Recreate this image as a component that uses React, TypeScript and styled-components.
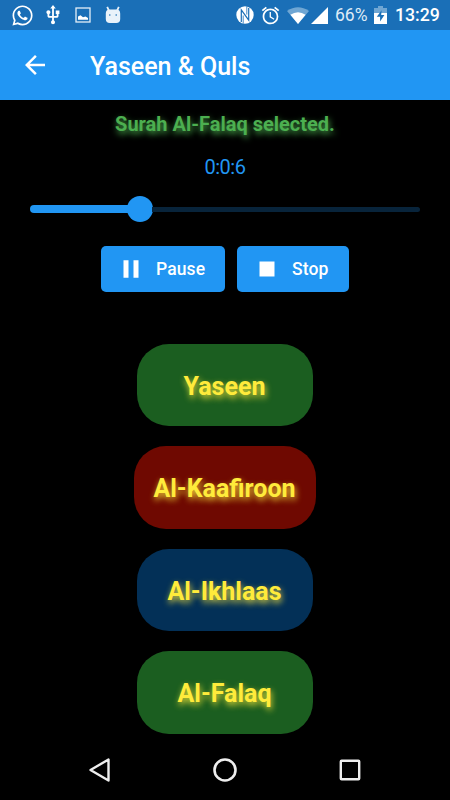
import React from "react";
import styled, { createGlobalStyle } from "styled-components";
import { FaWhatsapp } from "react-icons/fa";
import { MdArrowBack, MdPause, MdStop, MdUsb, MdAlarm } from "react-icons/md";

const GlobalStyle = createGlobalStyle`
  * { box-sizing: border-box; }
  body { margin: 0; background: #000; font-family: Roboto, sans-serif; }
  button { border: 0; padding: 0; font-family: inherit; }
  svg { display: block; flex: none; }
`;

const Screen = styled.div`
  width: 450px;
  height: 800px;
  display: flex;
  flex-direction: column;
  background: #000;
  overflow: hidden;
`;

const StatusBar = styled.div`
  height: 30px;
  flex: none;
  display: flex;
  align-items: center;
  background: #1a6fb7;
  color: #fff;
`;

const StatusSlot = styled.div<{ $w: number; $gap: number }>`
  width: ${(p) => p.$w}px;
  margin-left: ${(p) => p.$gap}px;
  flex: none;
  display: flex;
  justify-content: center;
`;

const StatusSpacer = styled.div`
  flex: 1;
`;

const StatusText = styled.span<{ $w: number; $gap: number; $strong?: boolean }>`
  width: ${(p) => p.$w}px;
  margin-left: ${(p) => p.$gap}px;
  font-size: ${(p) => (p.$strong ? 17.7 : 17.5)}px;
  font-weight: ${(p) => (p.$strong ? 500 : 400)};
  color: ${(p) => (p.$strong ? "#fff" : "#dfebf6")};
  line-height: 22px;
  white-space: nowrap;
`;

const AppBar = styled.header`
  height: 70px;
  flex: none;
  display: flex;
  align-items: center;
  padding-left: 20px;
  background: #2196f3;
  color: #fff;
`;

const BackButton = styled.button`
  width: 30px;
  height: 30px;
  background: none;
  color: #fff;
`;

const Title = styled.h1`
  margin: 3px 0 0 40px;
  font-size: 25px;
  font-weight: 500;
  line-height: 30px;
`;

const Content = styled.main`
  flex: 1;
  display: flex;
  flex-direction: column;
  align-items: center;
`;

const Selected = styled.div`
  margin-top: 12px;
  font-size: 20px;
  font-weight: 700;
  line-height: 24px;
  color: #4caf50;
  text-shadow: 1px 3px 6px #4caf50;
`;

const Timer = styled.div`
  margin-top: 19px;
  font-size: 20px;
  line-height: 24px;
  letter-spacing: -0.5px;
  color: #2196f3;
`;

const Slider = styled.div`
  width: 390px;
  height: 26px;
  margin-top: 17px;
  display: flex;
  align-items: center;
`;

const Played = styled.div`
  width: 98px;
  height: 8px;
  border-radius: 4px 0 0 4px;
  background: #2196f3;
`;

const Thumb = styled.div`
  width: 26px;
  height: 26px;
  margin: 0 -1px;
  border-radius: 50%;
  background: #2196f3;
`;

const Remaining = styled.div`
  flex: 1;
  height: 5px;
  border-radius: 0 3px 3px 0;
  background: #08243b;
`;

const Controls = styled.div`
  display: flex;
  gap: 12px;
  margin-top: 24px;
`;

const ControlButton = styled.button<{ $w: number }>`
  width: ${(p) => p.$w}px;
  height: 45.5px;
  display: flex;
  align-items: center;
  gap: 10px;
  padding-left: 15px;
  border-radius: 5px;
  background: #2196f3;
  color: #fff;
  font-size: 17.5px;
  font-weight: 500;
  letter-spacing: 0.1px;
`;

const SurahList = styled.div`
  margin-top: 52px;
  display: flex;
  flex-direction: column;
  align-items: center;
  gap: 20px;
`;

const SurahButton = styled.button<{ $color: string }>`
  min-width: 176px;
  height: 82.5px;
  padding: 3px 20.5px 0 19.5px;
  border-radius: 32px;
  background: ${(p) => p.$color};
  color: #ffeb3b;
  font-size: 25px;
  font-weight: 700;
  text-shadow: 1px 3px 6px rgba(255, 235, 59, 0.9);
`;

const NavBar = styled.nav`
  height: 60px;
  flex: none;
  display: grid;
  grid-template-columns: repeat(3, 125px);
  justify-content: center;
  justify-items: center;
  align-items: center;
`;

const surahs = [
  { name: "Yaseen", color: "#1b5e20" },
  { name: "Al-Kaafiroon", color: "#6f0901" },
  { name: "Al-Ikhlaas", color: "#033057" },
  { name: "Al-Falaq", color: "#1b5e20" },
];

const PictureIcon = () => (
  <svg width="16" height="16" viewBox="0 0 16 16">
    <rect x="1" y="1" width="14" height="14" fill="none" stroke="#e4eef7" strokeWidth="1.3" />
    <path d="M3 12.8V9.5l2.5-1.2L8 10.2l2.5-.6L13 11v1.8z" fill="#fff" />
  </svg>
);

const DroidIcon = () => (
  <svg width="16" height="18" viewBox="0 0 16 18">
    <path d="M2.2 .8l1.8 4M13.8 .8l-1.8 4" stroke="#e9f2fa" strokeWidth="1.8" />
    <path d="M.8 7.5Q.8 3.5 4.5 3.5h7q3.7 0 3.7 4V13q0 4-4 4H4.8q-4 0-4-4z" fill="#e9f2fa" />
    <circle cx="4.8" cy="9" r=".8" fill="#1a6fb7" />
    <circle cx="11.2" cy="9" r=".8" fill="#1a6fb7" />
  </svg>
);

const NfcIcon = () => (
  <svg width="18" height="18" viewBox="0 0 18 18">
    <circle cx="9" cy="9" r="8.7" fill="#fff" />
    <path d="M5.3 16V3.8L12.7 14.2V2" fill="none" stroke="#1a6fb7" strokeWidth="1.2" />
    <path d="M7.2 17.5V9.5M10.8 .5v8" stroke="#1a6fb7" strokeWidth=".8" />
  </svg>
);

const WifiIcon = () => (
  <svg width="22" height="17" viewBox="0 0 22 17">
    <path d="M11 17L0 4Q11-3.5 22 4z" fill="#6fa6d3" />
    <path d="M11 17L3.4 7.8Q11 2.8 18.6 7.8z" fill="#fff" />
  </svg>
);

const SignalIcon = () => (
  <svg width="17" height="17" viewBox="0 0 17 17">
    <path d="M17 0v17H0z" fill="#fff" />
  </svg>
);

const BatteryIcon = () => (
  <svg width="13" height="18" viewBox="0 0 13 18">
    <path d="M4 0h5v2h4v5H0V2h4z" fill="#6fa6d3" />
    <path d="M0 7h13v11H0z" fill="#fff" />
    <path d="M7.6 4.2L2.8 10.8h3.3v4.6L10.4 9H7.2z" fill="#1a6fb7" />
  </svg>
);

export default function App() {
  return (
    <>
      <GlobalStyle />
      <Screen>
        <StatusBar>
          <StatusSlot $w={20} $gap={12}><FaWhatsapp size={23} /></StatusSlot>
          <StatusSlot $w={14} $gap={14}><MdUsb size={22} /></StatusSlot>
          <StatusSlot $w={16} $gap={15}><PictureIcon /></StatusSlot>
          <StatusSlot $w={16} $gap={14}><DroidIcon /></StatusSlot>
          <StatusSpacer />
          <StatusSlot $w={18} $gap={0}><NfcIcon /></StatusSlot>
          <StatusSlot $w={18} $gap={7}><MdAlarm size={21} /></StatusSlot>
          <StatusSlot $w={22} $gap={8}><WifiIcon /></StatusSlot>
          <StatusSlot $w={17} $gap={2}><SignalIcon /></StatusSlot>
          <StatusText $w={34} $gap={7}>66%</StatusText>
          <StatusSlot $w={13} $gap={5}><BatteryIcon /></StatusSlot>
          <StatusText $w={55} $gap={8} $strong>13:29</StatusText>
        </StatusBar>
        <AppBar>
          <BackButton aria-label="Back"><MdArrowBack size={30} /></BackButton>
          <Title>Yaseen &amp; Quls</Title>
        </AppBar>
        <Content>
          <Selected>Surah Al-Falaq selected.</Selected>
          <Timer>0:0:6</Timer>
          <Slider>
            <Played />
            <Thumb />
            <Remaining />
          </Slider>
          <Controls>
            <ControlButton $w={124}><MdPause size={30} />Pause</ControlButton>
            <ControlButton $w={112}><MdStop size={30} />Stop</ControlButton>
          </Controls>
          <SurahList>
            {surahs.map((s) => (
              <SurahButton key={s.name} $color={s.color}>{s.name}</SurahButton>
            ))}
          </SurahList>
        </Content>
        <NavBar>
          <svg width="24" height="26" viewBox="0 0 24 26">
            <path d="M20.5 2.5v21L2.5 13z" fill="none" stroke="#eee" strokeWidth="2.4" strokeLinejoin="round" />
          </svg>
          <svg width="26" height="26" viewBox="0 0 26 26">
            <circle cx="13" cy="13" r="10.5" fill="none" stroke="#eee" strokeWidth="2.6" />
          </svg>
          <svg width="24" height="24" viewBox="0 0 24 24">
            <rect x="2.8" y="2.8" width="18.4" height="18.4" rx=".8" fill="none" stroke="#eee" strokeWidth="2.4" />
          </svg>
        </NavBar>
      </Screen>
    </>
  );
}
